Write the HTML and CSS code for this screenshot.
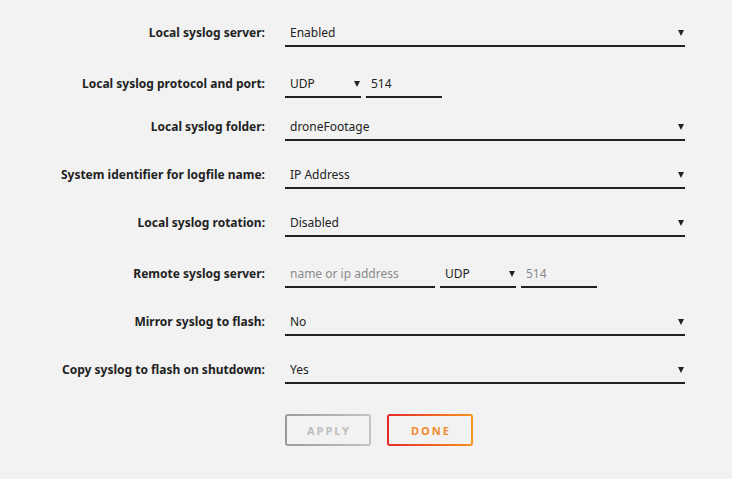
FILE: index.html
```html
<!DOCTYPE html>
<html lang="en">
<head>
  <meta charset="UTF-8">
  <title>Syslog Settings</title>
  <link rel="stylesheet" href="styles.css">
</head>
<body>

  <!-- Syslog form -->
  <div class="settings">

    <div class="row h47">
      <div class="label">Local syslog server:</div>
      <div class="field wide">
        <span class="value">Enabled</span>
        <span class="caret"></span>
      </div>
    </div>

    <div class="row h51">
      <div class="label">Local syslog protocol and port:</div>
      <div class="group">
        <div class="field small">
          <span class="value">UDP</span>
          <span class="caret"></span>
        </div>
        <div class="field small">
          <span class="value">514</span>
        </div>
      </div>
    </div>

    <div class="row h43">
      <div class="label">Local syslog folder:</div>
      <div class="field wide">
        <span class="value">droneFootage</span>
        <span class="caret"></span>
      </div>
    </div>

    <div class="row">
      <div class="label">System identifier for logfile name:</div>
      <div class="field wide">
        <span class="value">IP Address</span>
        <span class="caret"></span>
      </div>
    </div>

    <div class="row">
      <div class="label">Local syslog rotation:</div>
      <div class="field wide">
        <span class="value">Disabled</span>
        <span class="caret"></span>
      </div>
    </div>

    <div class="row h51">
      <div class="label">Remote syslog server:</div>
      <div class="group">
        <div class="field name">
          <span class="value hint">name or ip address</span>
        </div>
        <div class="field small">
          <span class="value">UDP</span>
          <span class="caret"></span>
        </div>
        <div class="field small">
          <span class="value hint">514</span>
        </div>
      </div>
    </div>

    <div class="row">
      <div class="label">Mirror syslog to flash:</div>
      <div class="field wide">
        <span class="value">No</span>
        <span class="caret"></span>
      </div>
    </div>

    <div class="row">
      <div class="label">Copy syslog to flash on shutdown:</div>
      <div class="field wide">
        <span class="value">Yes</span>
        <span class="caret"></span>
      </div>
    </div>

    <!-- Buttons -->
    <div class="actions">
      <div class="btn apply">APPLY</div>
      <div class="btn done"><span class="done-text">DONE</span></div>
    </div>

  </div>

</body>
</html>
```

FILE: styles.css
```css
    body {
      margin: 0;
      font-family: "Noto Sans", Arial, sans-serif;
      background-color: #f2f2f2;
      color: #222;
    }

    .settings {
      display: flex;
      flex-direction: column;
    }

    .row {
      height: 48px;
      display: flex;
      align-items: flex-end;
      gap: 20px;
    }

    .row.h47 { height: 47px; }
    .row.h51 { height: 51px; }
    .row.h43 { height: 43px; }

    .label {
      width: 265px;
      text-align: right;
      font-size: 12px;
      font-weight: bold;
      line-height: 26px;
      padding-bottom: 1px;
      white-space: nowrap;
    }

    .group {
      display: flex;
      gap: 5px;
    }

    .field {
      height: 24px;
      border-bottom: 2px solid #222;
      display: flex;
      align-items: center;
      justify-content: space-between;
      padding: 2px 1px 0 5px;
      box-sizing: content-box;
    }

    .field.wide  { width: 394px; }
    .field.small { width: 70px; }
    .field.name  { width: 144px; }

    .value {
      font-size: 12px;
      line-height: 24px;
      white-space: nowrap;
    }

    .value.hint {
      color: #8a8a8a;
    }

    .caret {
      width: 0;
      height: 0;
      border-left: 3px solid transparent;
      border-right: 3px solid transparent;
      border-top: 6px solid #222;
    }

    /* Buttons */
    .actions {
      display: flex;
      gap: 16px;
      margin-top: 30px;
      padding-left: 285px;
    }

    .btn {
      width: 80px;
      height: 28px;
      border: 2px solid transparent;
      border-radius: 3px;
      display: flex;
      align-items: center;
      justify-content: center;
      font-size: 11px;
      font-weight: bold;
      letter-spacing: 2px;
      padding-left: 2px;
      box-sizing: content-box;
    }

    .btn.apply {
      color: #bdbdbd;
      background:
        linear-gradient(#f2f2f2, #f2f2f2) padding-box,
        linear-gradient(to right, #9a9a9a, #c4c4c4) border-box;
    }

    .btn.done {
      background:
        linear-gradient(#f2f2f2, #f2f2f2) padding-box,
        linear-gradient(to right, #e5282a, #f7931e) border-box;
    }

    .done-text {
      color: #f28a2e;
    }
```
